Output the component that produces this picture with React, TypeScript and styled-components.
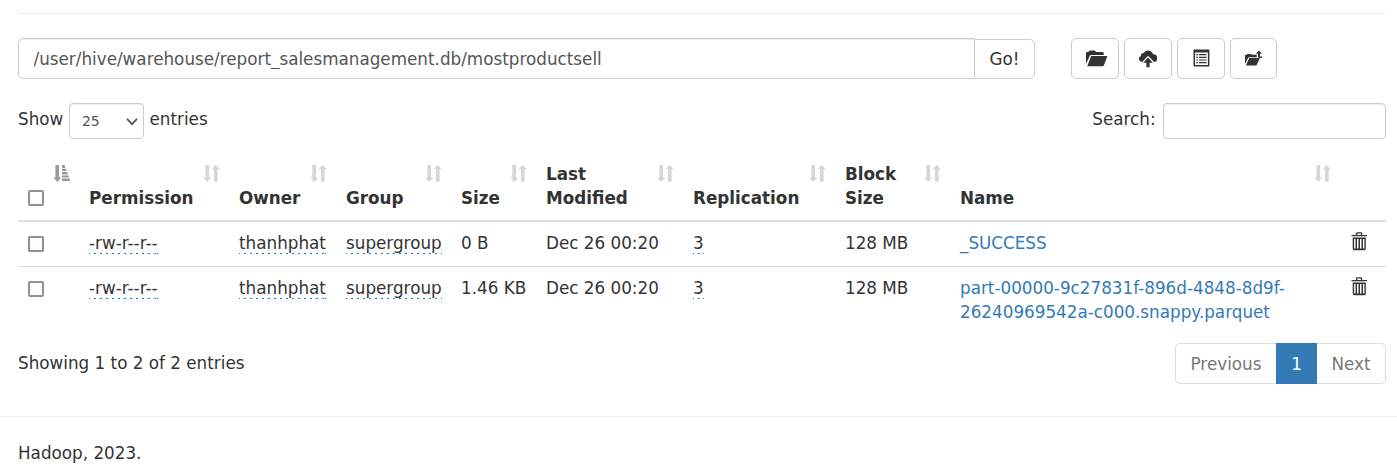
import React from 'react';
import styled, { createGlobalStyle } from 'styled-components';

const GlobalStyle = createGlobalStyle`
  *, *::before, *::after { box-sizing: border-box; }
  body {
    margin: 0;
    background: #fff;
    color: #333;
    font: 16.8px/24px "DejaVu Sans", sans-serif;
    overflow: hidden;
  }
  input, select, button { font-family: inherit; color: inherit; }
`;

const Page = styled.div`
  padding-top: 13px;
`;

const Content = styled.main`
  padding: 0 11px 0 18px;
`;

const Rule = styled.hr`
  height: 1px;
  margin: 0;
  border: 0;
  background: #eee;
`;

const Toolbar = styled.div`
  display: flex;
  align-items: flex-end;
  margin-top: 24px;
`;

const PathInput = styled.input`
  width: 957px;
  height: 41px;
  padding: 0 15px 0 14.5px;
  border: 1px solid #ccc;
  border-radius: 5px 0 0 5px;
  box-shadow: inset 0 1px 1px rgba(0, 0, 0, 0.075);
  color: #555;
  font-size: 16.8px;
  outline: none;
`;

const Button = styled.button<{ $width: number }>`
  display: flex;
  align-items: center;
  justify-content: center;
  width: ${({ $width }) => $width}px;
  height: 41px;
  padding: 0;
  border: 1px solid #ccc;
  border-radius: 5px;
  background: #fff;
  font-size: 16.8px;
  svg { display: block; }
`;

const GoButton = styled(Button)`
  height: 40px;
  margin-left: -1px;
  border-radius: 0 5px 5px 0;
`;

const Actions = styled.div`
  display: flex;
  gap: 5px;
  margin-left: 36px;
`;

const Filters = styled.div`
  display: flex;
  justify-content: space-between;
  height: 36px;
  margin-top: 24px;
`;

const FilterLabel = styled.label<{ $gap: number }>`
  display: flex;
  gap: ${({ $gap }) => $gap}px;
  line-height: 32px;
`;

const SelectBox = styled.span`
  display: flex;
  align-items: center;
  justify-content: space-between;
  width: 75px;
  height: 36px;
  padding: 0 5px 0 12px;
  border: 1px solid #ccc;
  border-radius: 4px;
  box-shadow: inset 0 1px 1px rgba(0, 0, 0, 0.075);
  color: #555;
  font-size: 14px;
  svg { margin-top: 1px; }
`;

const SearchInput = styled.input`
  width: 223px;
  height: 36px;
  border: 1px solid #ccc;
  border-radius: 4px;
  box-shadow: inset 0 1px 1px rgba(0, 0, 0, 0.075);
  outline: none;
`;

const Table = styled.table`
  width: 1368px;
  margin-top: 12px;
  border-spacing: 0;
  table-layout: fixed;
`;

const HeadCell = styled.th`
  height: 71px;
  padding: 10px 9px 10px 10px;
  border-bottom: 2px solid #ddd;
  text-align: left;
  vertical-align: bottom;
  font-weight: bold;
`;

const HeadContent = styled.div`
  display: flex;
  justify-content: space-between;
  align-items: flex-end;
  height: 49px;
`;

const SortMark = styled.span<{ $active?: boolean }>`
  align-self: flex-start;
  flex: none;
  height: 18px;
  margin-top: 3px;
  color: ${({ $active }) => ($active ? '#999' : '#d6d6d6')};
  svg { display: block; }
`;

const Cell = styled.td<{ $divided: boolean }>`
  padding: 9px 0 11px 10px;
  border-top: ${({ $divided }) => ($divided ? '1px solid #ddd' : '0')};
  vertical-align: top;
  white-space: nowrap;
  svg { display: block; margin: 1px 0 0 1px; }
`;

const Checkbox = styled.input.attrs({ type: 'checkbox' })`
  appearance: none;
  display: block;
  width: 16px;
  height: 16px;
  margin: 5px 0 3px;
  border: 2px solid #8f8f9d;
  border-radius: 2px;
  background: #fff;
`;

const HeadCheckbox = styled(Checkbox)`
  margin: 4px 0;
`;

const Editable = styled.span`
  display: inline-block;
  height: 23px;
  vertical-align: top;
  background: repeating-linear-gradient(90deg, #08c 0 2px, transparent 2px 6px) -1px 100% / 100% 1px repeat-x;
`;

const FileLink = styled.a`
  display: block;
  width: 340px;
  color: #337ab7;
  white-space: normal;
  text-decoration: none;
`;

const Footer = styled.div`
  display: flex;
  justify-content: space-between;
  margin: 8px 0 32px;
`;

const Info = styled.div`
  padding-top: 8px;
`;

const Pagination = styled.div`
  display: flex;
  height: 41px;
`;

const PageButton = styled.a<{ $width: number; $kind: 'first' | 'current' | 'last' }>`
  width: ${({ $width }) => $width}px;
  border: 1px solid ${({ $kind }) => ($kind === 'current' ? '#337ab7' : '#ddd')};
  border-left-width: ${({ $kind }) => ($kind === 'last' ? 0 : 1)}px;
  border-right-width: ${({ $kind }) => ($kind === 'first' ? 0 : 1)}px;
  border-radius: ${({ $kind }) => ({ first: '5px 0 0 5px', current: '0', last: '0 5px 5px 0' })[$kind]};
  background: ${({ $kind }) => ($kind === 'current' ? '#337ab7' : '#fff')};
  color: ${({ $kind }) => ($kind === 'current' ? '#fff' : '#777')};
  line-height: 40px;
  text-align: center;
`;

const Copyright = styled.p`
  margin: 24px 0 0 18px;
`;

const FolderOpenIcon = () => (
  <svg width="22" height="17" viewBox="-2 0 22 17" overflow="visible" fill="currentColor">
    <path d="M0 14V3.4Q0 2 1.2 2H2.3L3 1.1Q3.4.5 4 .5H8.2Q8.8.5 9.2 1.1L9.9 2H16.5Q17.7 2 17.7 3.4V5H5.3Q4.1 5 3.7 6Z" />
    <path d="M5.2 6H21.4L17.8 15.6Q17.5 16.3 16.7 16.3H1.2Z" />
  </svg>
);

const CloudUploadIcon = () => (
  <svg width="18" height="18" viewBox="0 0 18 18" fill="currentColor">
    <path d="M3.2 12A3.1 3.1 0 0 1 2 6 2.6 2.6 0 0 1 4.5 3 5.2 5.2 0 0 1 14 4.3 3.9 3.9 0 0 1 15.2 12L9 5.8Z" />
    <path d="M9 7.6 13.8 12.8H10.6V17.3H7.4V12.8H4.2Z" />
  </svg>
);

const ListIcon = () => (
  <svg width="17" height="18" viewBox="0 .5 17 18" overflow="visible" fill="currentColor">
    <path fillRule="evenodd" d="M1.2 0H15.8Q16.4 0 16.4.7V16.3Q16.4 17 15.8 17H1.2Q.5 17 .5 16.3V.7Q.5 0 1.2 0ZM2 3V15.5H14.9V3Z" />
    <path d="M3.3 4.5H5V5.7H3.3ZM6 4.5H13.5V5.7H6ZM3.3 7.2H5V8.4H3.3ZM6 7.2H13.5V8.4H6ZM3.3 9.9H5V11.1H3.3ZM6 9.9H13.5V11.1H6ZM3.3 12.6H5V13.8H3.3ZM6 12.6H13.5V13.8H6Z" />
  </svg>
);

const FolderUpIcon = () => (
  <svg width="17" height="17" viewBox="0 0 17 17" overflow="visible" fill="currentColor">
    <path d="M0 14V5.8Q0 4.8 1 4.8H1.8L2.5 3.9H6L6.7 4.8H11.8V7.2H4.2Q3.3 7.2 3 7.9Z" />
    <path d="M4.3 8.1H14.8L11.8 14.8Q11.5 15.5 10.8 15.5H.9Z" />
    <path d="M13.9.5 17 3.8H14.9V6.2Q14.9 6.6 15.3 6.6H16.9V8H14.4Q13 8 13 6.6V3.8H10.9Z" />
  </svg>
);

const TrashIcon = () => (
  <svg width="17" height="19" viewBox="0 0 17 19" fill="currentColor">
    <path fillRule="evenodd" d="M.5 3H5V1.5Q5 .2 6.2 .2H10Q11.2.2 11.2 1.5V3H16V4.3H.5ZM6.3 3H9.9V1.6H6.3Z" />
    <path fillRule="evenodd" d="M1.7 5.6H14.8V16.8Q14.8 18.2 13.5 18.2H3Q1.7 18.2 1.7 16.8ZM3.1 7V16.4H4.5V7ZM6 7V16.4H7.5V7ZM9 7V16.4H10.5V7ZM12 7V16.4H13.4V7Z" />
  </svg>
);

const SortIcon = () => (
  <svg width="17" height="18" viewBox="0 -.3 17 18" fill="currentColor">
    <path d="M2.4.6H6V13.2H8.2L4.3 17.6.3 13.2H2.4ZM12.6.5 16.7 4.9H14.6V17.4H11V4.9H8.7Z" />
  </svg>
);

const SortAscIcon = () => (
  <svg width="17" height="18" viewBox="0 -.3 17 18" fill="currentColor">
    <path d="M2.4.6H6V13.2H8.2L4.3 17.6.3 13.2H2.4ZM9 .6H12V3.6H9ZM9 4.5H13.3V6.8H9ZM9 7.8H14.6V10.2H9ZM9 11.1H15.8V13.3H9ZM9 14.2H17V16.6H9Z" />
  </svg>
);

const ChevronIcon = () => (
  <svg width="12" height="8" viewBox="0 0 12 8" fill="none" stroke="currentColor" strokeWidth="1.8" strokeLinecap="round">
    <path d="m1.5 1.3 4.5 4.8 4.5-4.8" />
  </svg>
);

const columns = [
  { label: '', width: 61 },
  { label: 'Permission', width: 150 },
  { label: 'Owner', width: 107 },
  { label: 'Group', width: 115 },
  { label: 'Size', width: 85 },
  { label: 'Last Modified', width: 147 },
  { label: 'Replication', width: 152 },
  { label: 'Block Size', width: 115 },
  { label: 'Name', width: 390 },
];

const files = [
  { size: '0 B', name: '_SUCCESS' },
  { size: '1.46 KB', name: 'part-00000-9c27831f-896d-4848-8d9f-26240969542a-c000.snappy.parquet' },
];

const actions = [
  { title: 'Create directory', width: 48, icon: <FolderOpenIcon /> },
  { title: 'Upload files', width: 48, icon: <CloudUploadIcon /> },
  { title: 'Cut and paste', width: 48, icon: <ListIcon /> },
  { title: 'Parent directory', width: 47, icon: <FolderUpIcon /> },
];

export default function App() {
  return (
    <>
      <GlobalStyle />
      <Page>
        <Content>
          <Rule />
          <Toolbar>
            <PathInput defaultValue="/user/hive/warehouse/report_salesmanagement.db/mostproductsell" />
            <GoButton $width={61}>Go!</GoButton>
            <Actions>
              {actions.map((a) => (
                <Button key={a.title} $width={a.width} aria-label={a.title}>{a.icon}</Button>
              ))}
            </Actions>
          </Toolbar>
          <Filters>
            <FilterLabel $gap={5.6}>
              Show
              <SelectBox>25<ChevronIcon /></SelectBox>
              entries
            </FilterLabel>
            <FilterLabel $gap={7.4}>
              Search:
              <SearchInput />
            </FilterLabel>
          </Filters>
          <Table>
            <colgroup>
              {columns.map((c) => <col key={c.label} width={c.width} />)}
              <col />
            </colgroup>
            <thead>
              <tr>
                {columns.map((c, i) => (
                  <HeadCell key={c.label}>
                    <HeadContent>
                      {i === 0 ? <HeadCheckbox /> : <span>{c.label}</span>}
                      <SortMark $active={i === 0}>{i === 0 ? <SortAscIcon /> : <SortIcon />}</SortMark>
                    </HeadContent>
                  </HeadCell>
                ))}
                <HeadCell />
              </tr>
            </thead>
            <tbody>
              {files.map((f, i) => (
                <tr key={f.name}>
                  <Cell $divided={i > 0}><Checkbox /></Cell>
                  <Cell $divided={i > 0}><Editable>-rw-r--r--</Editable></Cell>
                  <Cell $divided={i > 0}><Editable>thanhphat</Editable></Cell>
                  <Cell $divided={i > 0}><Editable>supergroup</Editable></Cell>
                  <Cell $divided={i > 0}>{f.size}</Cell>
                  <Cell $divided={i > 0}>Dec 26 00:20</Cell>
                  <Cell $divided={i > 0}><Editable>3</Editable></Cell>
                  <Cell $divided={i > 0}>128 MB</Cell>
                  <Cell $divided={i > 0}><FileLink>{f.name}</FileLink></Cell>
                  <Cell $divided={i > 0}><TrashIcon /></Cell>
                </tr>
              ))}
            </tbody>
          </Table>
          <Footer>
            <Info>Showing 1 to 2 of 2 entries</Info>
            <Pagination>
              <PageButton $width={101} $kind="first">Previous</PageButton>
              <PageButton $width={41} $kind="current">1</PageButton>
              <PageButton $width={69} $kind="last">Next</PageButton>
            </Pagination>
          </Footer>
        </Content>
        <Rule />
        <Copyright>Hadoop, 2023.</Copyright>
      </Page>
    </>
  );
}
